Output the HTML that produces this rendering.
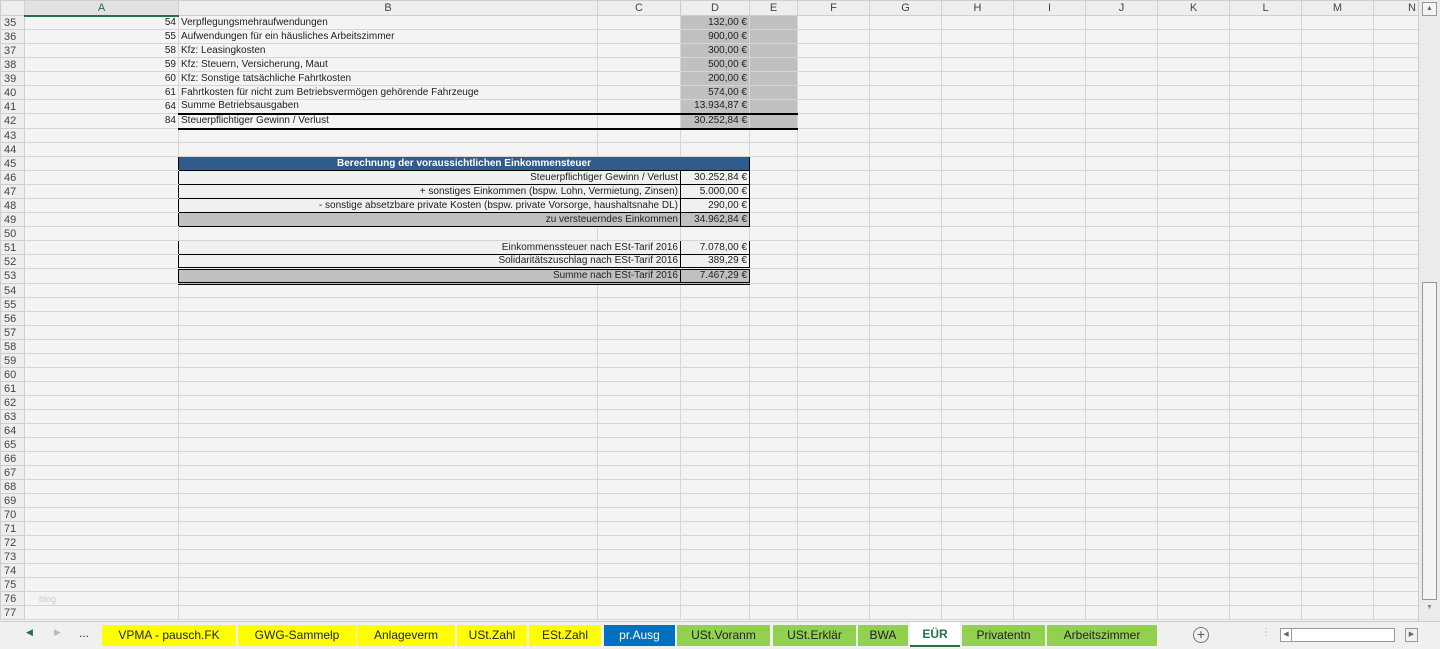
<!DOCTYPE html>
<html><head><meta charset="utf-8"><style>
*{box-sizing:border-box;margin:0;padding:0}
body{width:1440px;height:649px;overflow:hidden;background:#f3f3f3;font-family:"Liberation Sans",sans-serif;font-size:10px;color:#222;position:relative}
table{position:absolute;left:0;top:0;border-collapse:collapse;table-layout:fixed;width:1418px}
td{border:1px solid #d6d6d6;height:14px;padding:0 2px;white-space:nowrap;overflow:visible;line-height:12px;background:#f4f4f4}
tr.h td{height:15px;background:#eeeeee;text-align:center;color:#444;font-size:11px;border-color:#cfcfcf}
td.rn{text-align:left;color:#444;font-size:11px;background:#eeeeee;padding-left:3px;border-color:#cfcfcf}
td.r{text-align:right}
td.bl{border-right:1px solid #000}
.g{background:#c0c0c0}
.w{background:#f0f0f0;border:1px solid #000}
.gb{background:#c0c0c0;border:1px solid #000}
.hd{background:#2f5b8e;color:#fff;font-weight:bold;text-align:center;border:1px solid #000}
.t1{border-top:1px solid #000}
.t2{border-top:2px solid #000}
.b2{border-bottom:2px solid #000}
.dt{border-top:3px double #000}
.db{border-bottom:3px double #000}
#vs{position:absolute;left:1418px;top:0;width:22px;height:621px;background:#ebebeb;border-left:1px solid #ccc}
#tabs{position:absolute;left:0;top:621px;width:1440px;height:28px;background:#f0f0f0;border-top:1px solid #ccc}
.tab{position:absolute;top:3px;height:21px;font-size:12px;line-height:21px;text-align:center;color:#222}
.y{background:#ffff00}.gr{background:#92d050}
</style></head><body>
<table>
<colgroup><col style="width:24px"><col style="width:154px"><col style="width:419px"><col style="width:83px"><col style="width:69px"><col style="width:48px"><col style="width:72px"><col style="width:72px"><col style="width:72px"><col style="width:72px"><col style="width:72px"><col style="width:72px"><col style="width:72px"><col style="width:72px"><col style="width:45px"></colgroup>
<tr class="h"><td></td><td style="color:#217346;border-bottom:2px solid #217346;background:#e2e2e2">A</td><td>B</td><td>C</td><td>D</td><td>E</td><td>F</td><td>G</td><td>H</td><td>I</td><td>J</td><td>K</td><td>L</td><td>M</td><td style="text-align:right">N</td></tr>
<tr><td class="rn">35</td><td class="r">54</td><td>Verpflegungsmehraufwendungen</td><td></td><td class="g r">132,00 €</td><td class="g"></td><td></td><td></td><td></td><td></td><td></td><td></td><td></td><td></td><td></td></tr>
<tr><td class="rn">36</td><td class="r">55</td><td>Aufwendungen für ein häusliches Arbeitszimmer</td><td></td><td class="g r">900,00 €</td><td class="g"></td><td></td><td></td><td></td><td></td><td></td><td></td><td></td><td></td><td></td></tr>
<tr><td class="rn">37</td><td class="r">58</td><td>Kfz: Leasingkosten</td><td></td><td class="g r">300,00 €</td><td class="g"></td><td></td><td></td><td></td><td></td><td></td><td></td><td></td><td></td><td></td></tr>
<tr><td class="rn">38</td><td class="r">59</td><td>Kfz: Steuern, Versicherung, Maut</td><td></td><td class="g r">500,00 €</td><td class="g"></td><td></td><td></td><td></td><td></td><td></td><td></td><td></td><td></td><td></td></tr>
<tr><td class="rn">39</td><td class="r">60</td><td>Kfz: Sonstige tatsächliche Fahrtkosten</td><td></td><td class="g r">200,00 €</td><td class="g"></td><td></td><td></td><td></td><td></td><td></td><td></td><td></td><td></td><td></td></tr>
<tr><td class="rn">40</td><td class="r">61</td><td>Fahrtkosten für nicht zum Betriebsvermögen gehörende Fahrzeuge</td><td></td><td class="g r">574,00 €</td><td class="g"></td><td></td><td></td><td></td><td></td><td></td><td></td><td></td><td></td><td></td></tr>
<tr><td class="rn">41</td><td class="r">64</td><td class="t1">Summe Betriebsausgaben</td><td class="t1"></td><td class="g r t1">13.934,87 €</td><td class="g t1"></td><td></td><td></td><td></td><td></td><td></td><td></td><td></td><td></td><td></td></tr>
<tr style="height:15px"><td class="rn">42</td><td class="r">84</td><td class="t2 b2">Steuerpflichtiger Gewinn / Verlust</td><td class="t2 b2"></td><td class="g r t2 b2">30.252,84 €</td><td class="g t2 b2"></td><td></td><td></td><td></td><td></td><td></td><td></td><td></td><td></td><td></td></tr>
<tr><td class="rn">43</td><td></td><td></td><td></td><td></td><td></td><td></td><td></td><td></td><td></td><td></td><td></td><td></td><td></td><td></td></tr>
<tr><td class="rn">44</td><td></td><td></td><td></td><td></td><td></td><td></td><td></td><td></td><td></td><td></td><td></td><td></td><td></td><td></td></tr>
<tr><td class="rn">45</td><td class="bl"></td><td colspan="3" class="hd">Berechnung der voraussichtlichen Einkommensteuer</td><td></td><td></td><td></td><td></td><td></td><td></td><td></td><td></td><td></td><td></td></tr>
<tr><td class="rn">46</td><td class="bl"></td><td colspan="2" class="w r">Steuerpflichtiger Gewinn / Verlust</td><td class="w r">30.252,84 €</td><td></td><td></td><td></td><td></td><td></td><td></td><td></td><td></td><td></td><td></td></tr>
<tr><td class="rn">47</td><td class="bl"></td><td colspan="2" class="w r">+ sonstiges Einkommen (bspw. Lohn, Vermietung, Zinsen)</td><td class="w r">5.000,00 €</td><td></td><td></td><td></td><td></td><td></td><td></td><td></td><td></td><td></td><td></td></tr>
<tr><td class="rn">48</td><td class="bl"></td><td colspan="2" class="w r">- sonstige absetzbare private Kosten (bspw. private Vorsorge, haushaltsnahe DL)</td><td class="w r">290,00 €</td><td></td><td></td><td></td><td></td><td></td><td></td><td></td><td></td><td></td><td></td></tr>
<tr><td class="rn">49</td><td class="bl"></td><td colspan="2" class="gb r">zu versteuerndes Einkommen</td><td class="gb r">34.962,84 €</td><td></td><td></td><td></td><td></td><td></td><td></td><td></td><td></td><td></td><td></td></tr>
<tr><td class="rn">50</td><td></td><td></td><td></td><td></td><td></td><td></td><td></td><td></td><td></td><td></td><td></td><td></td><td></td><td></td></tr>
<tr><td class="rn">51</td><td class="bl"></td><td colspan="2" class="w r">Einkommenssteuer nach ESt-Tarif 2016</td><td class="w r">7.078,00 €</td><td></td><td></td><td></td><td></td><td></td><td></td><td></td><td></td><td></td><td></td></tr>
<tr><td class="rn">52</td><td class="bl"></td><td colspan="2" class="w r">Solidaritätszuschlag nach ESt-Tarif 2016</td><td class="w r">389,29 €</td><td></td><td></td><td></td><td></td><td></td><td></td><td></td><td></td><td></td><td></td></tr>
<tr><td class="rn">53</td><td class="bl"></td><td colspan="2" class="gb r dt db">Summe nach ESt-Tarif 2016</td><td class="gb r dt db">7.467,29 €</td><td></td><td></td><td></td><td></td><td></td><td></td><td></td><td></td><td></td><td></td></tr>
<tr><td class="rn">54</td><td></td><td></td><td></td><td></td><td></td><td></td><td></td><td></td><td></td><td></td><td></td><td></td><td></td><td></td></tr>
<tr><td class="rn">55</td><td></td><td></td><td></td><td></td><td></td><td></td><td></td><td></td><td></td><td></td><td></td><td></td><td></td><td></td></tr>
<tr><td class="rn">56</td><td></td><td></td><td></td><td></td><td></td><td></td><td></td><td></td><td></td><td></td><td></td><td></td><td></td><td></td></tr>
<tr><td class="rn">57</td><td></td><td></td><td></td><td></td><td></td><td></td><td></td><td></td><td></td><td></td><td></td><td></td><td></td><td></td></tr>
<tr><td class="rn">58</td><td></td><td></td><td></td><td></td><td></td><td></td><td></td><td></td><td></td><td></td><td></td><td></td><td></td><td></td></tr>
<tr><td class="rn">59</td><td></td><td></td><td></td><td></td><td></td><td></td><td></td><td></td><td></td><td></td><td></td><td></td><td></td><td></td></tr>
<tr><td class="rn">60</td><td></td><td></td><td></td><td></td><td></td><td></td><td></td><td></td><td></td><td></td><td></td><td></td><td></td><td></td></tr>
<tr><td class="rn">61</td><td></td><td></td><td></td><td></td><td></td><td></td><td></td><td></td><td></td><td></td><td></td><td></td><td></td><td></td></tr>
<tr><td class="rn">62</td><td></td><td></td><td></td><td></td><td></td><td></td><td></td><td></td><td></td><td></td><td></td><td></td><td></td><td></td></tr>
<tr><td class="rn">63</td><td></td><td></td><td></td><td></td><td></td><td></td><td></td><td></td><td></td><td></td><td></td><td></td><td></td><td></td></tr>
<tr><td class="rn">64</td><td></td><td></td><td></td><td></td><td></td><td></td><td></td><td></td><td></td><td></td><td></td><td></td><td></td><td></td></tr>
<tr><td class="rn">65</td><td></td><td></td><td></td><td></td><td></td><td></td><td></td><td></td><td></td><td></td><td></td><td></td><td></td><td></td></tr>
<tr><td class="rn">66</td><td></td><td></td><td></td><td></td><td></td><td></td><td></td><td></td><td></td><td></td><td></td><td></td><td></td><td></td></tr>
<tr><td class="rn">67</td><td></td><td></td><td></td><td></td><td></td><td></td><td></td><td></td><td></td><td></td><td></td><td></td><td></td><td></td></tr>
<tr><td class="rn">68</td><td></td><td></td><td></td><td></td><td></td><td></td><td></td><td></td><td></td><td></td><td></td><td></td><td></td><td></td></tr>
<tr><td class="rn">69</td><td></td><td></td><td></td><td></td><td></td><td></td><td></td><td></td><td></td><td></td><td></td><td></td><td></td><td></td></tr>
<tr><td class="rn">70</td><td></td><td></td><td></td><td></td><td></td><td></td><td></td><td></td><td></td><td></td><td></td><td></td><td></td><td></td></tr>
<tr><td class="rn">71</td><td></td><td></td><td></td><td></td><td></td><td></td><td></td><td></td><td></td><td></td><td></td><td></td><td></td><td></td></tr>
<tr><td class="rn">72</td><td></td><td></td><td></td><td></td><td></td><td></td><td></td><td></td><td></td><td></td><td></td><td></td><td></td><td></td></tr>
<tr><td class="rn">73</td><td></td><td></td><td></td><td></td><td></td><td></td><td></td><td></td><td></td><td></td><td></td><td></td><td></td><td></td></tr>
<tr><td class="rn">74</td><td></td><td></td><td></td><td></td><td></td><td></td><td></td><td></td><td></td><td></td><td></td><td></td><td></td><td></td></tr>
<tr><td class="rn">75</td><td></td><td></td><td></td><td></td><td></td><td></td><td></td><td></td><td></td><td></td><td></td><td></td><td></td><td></td></tr>
<tr><td class="rn">76</td><td style="color:#ccc;font-size:9px;padding-left:14px">blog</td><td></td><td></td><td></td><td></td><td></td><td></td><td></td><td></td><td></td><td></td><td></td><td></td><td></td></tr>
<tr><td class="rn">77</td><td></td><td></td><td></td><td></td><td></td><td></td><td></td><td></td><td></td><td></td><td></td><td></td><td></td><td></td></tr>
</table>
<div id="vs">
 <div style="position:absolute;left:3px;top:2px;width:15px;height:14px;border:1px solid #999;background:#f4f4f4;font-size:7px;text-align:center;line-height:12px;color:#666">▲</div>
 <div style="position:absolute;left:3px;top:282px;width:15px;height:318px;border:1px solid #999;background:#f4f4f4"></div>
 <div style="position:absolute;left:3px;top:602px;width:15px;height:14px;font-size:7px;text-align:center;line-height:12px;color:#888">▼</div>
</div>
<div id="tabs">
 <div style="position:absolute;left:26px;top:5px;font-size:9px;color:#217346">◀</div>
 <div style="position:absolute;left:54px;top:5px;font-size:9px;color:#bbb">▶</div>
 <div style="position:absolute;left:79px;top:4px;font-size:12px;color:#333">...</div>
 <div class="tab y" style="left:102px;width:134px">VPMA - pausch.FK</div>
 <div class="tab y" style="left:238px;width:118px">GWG-Sammelp</div>
 <div class="tab y" style="left:357px;width:98px">Anlageverm</div>
 <div class="tab y" style="left:457px;width:70px">USt.Zahl</div>
 <div class="tab y" style="left:529px;width:72px">ESt.Zahl</div>
 <div class="tab" style="left:604px;width:71px;background:#0070c0;color:#fff">pr.Ausg</div>
 <div class="tab gr" style="left:677px;width:93px">USt.Voranm</div>
 <div class="tab gr" style="left:773px;width:83px">USt.Erklär</div>
 <div class="tab gr" style="left:858px;width:50px">BWA</div>
 <div class="tab" style="left:910px;top:0;height:25px;width:50px;background:#fff;color:#217346;font-weight:bold;border-bottom:2px solid #217346;line-height:25px">EÜR</div>
 <div class="tab gr" style="left:962px;width:83px">Privatentn</div>
 <div class="tab gr" style="left:1047px;width:110px">Arbeitszimmer</div>
 <div style="position:absolute;left:1193px;top:5px;width:16px;height:16px;border:1px solid #777;border-radius:50%;text-align:center;line-height:13px;font-size:14px;color:#555">+</div>
 <div style="position:absolute;left:1261px;top:5px;font-size:10px;color:#aaa">⋮</div>
 <div style="position:absolute;left:1280px;top:6px;width:115px;height:14px;border:1px solid #999;background:#fff"><div style="width:11px;height:12px;border-right:1px solid #999;font-size:7px;text-align:center;line-height:12px;color:#666">◀</div></div>
 <div style="position:absolute;left:1405px;top:6px;width:13px;height:14px;border:1px solid #999;font-size:7px;text-align:center;line-height:12px;color:#666">▶</div>
</div>
</body></html>
